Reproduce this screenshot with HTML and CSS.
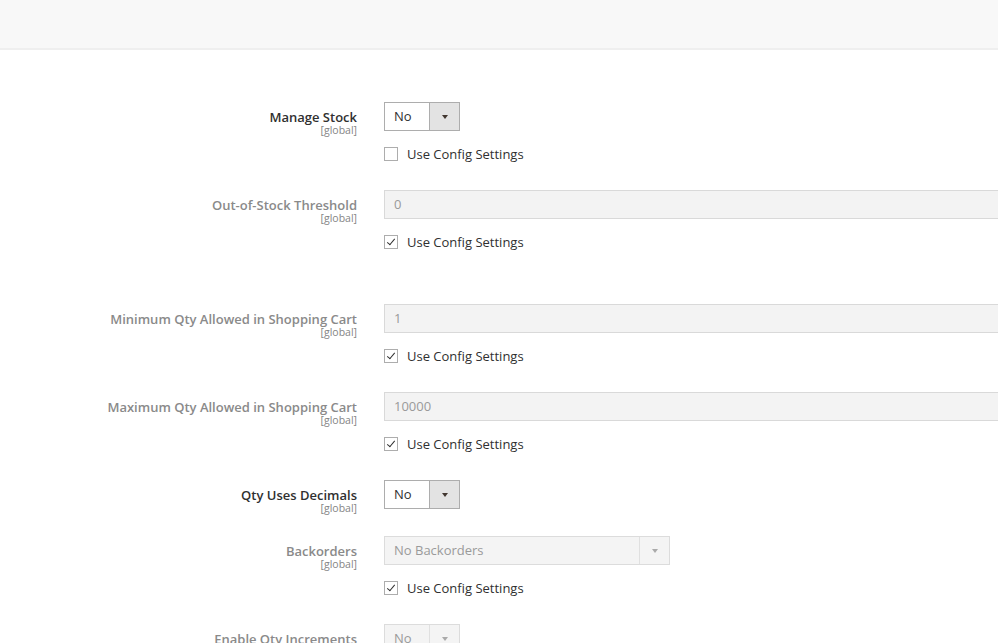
FILE: index.html
```html
<!DOCTYPE html>
<html>
<head>
<meta charset="utf-8">
<link rel="stylesheet" href="styles.css">
</head>
<body>
<div class="header"></div>
<div class="form">
  <div class="field">
    <div class="label"><span class="title">Manage Stock</span><span class="scope">[global]</span></div>
    <div class="control">
      <div class="select small"><span class="val">No</span><span class="arrow"><i></i></span></div>
      <label class="check"><span class="box"></span>Use Config Settings</label>
    </div>
  </div>
  <div class="field disabled">
    <div class="label"><span class="title">Out-of-Stock Threshold</span><span class="scope">[global]</span></div>
    <div class="control">
      <div class="input">0</div>
      <label class="check"><span class="box on"></span>Use Config Settings</label>
    </div>
  </div>
  <div class="spacer"></div>
  <div class="field disabled">
    <div class="label"><span class="title">Minimum Qty Allowed in Shopping Cart</span><span class="scope">[global]</span></div>
    <div class="control">
      <div class="input">1</div>
      <label class="check"><span class="box on"></span>Use Config Settings</label>
    </div>
  </div>
  <div class="field disabled">
    <div class="label"><span class="title">Maximum Qty Allowed in Shopping Cart</span><span class="scope">[global]</span></div>
    <div class="control">
      <div class="input">10000</div>
      <label class="check"><span class="box on"></span>Use Config Settings</label>
    </div>
  </div>
  <div class="field">
    <div class="label"><span class="title">Qty Uses Decimals</span><span class="scope">[global]</span></div>
    <div class="control">
      <div class="select small"><span class="val">No</span><span class="arrow"><i></i></span></div>
    </div>
  </div>
  <div class="field disabled">
    <div class="label"><span class="title">Backorders</span><span class="scope">[global]</span></div>
    <div class="control">
      <div class="select wide"><span class="val">No Backorders</span><span class="arrow"><i></i></span></div>
      <label class="check"><span class="box on"></span>Use Config Settings</label>
    </div>
  </div>
  <div class="field disabled">
    <div class="label"><span class="title">Enable Qty Increments</span><span class="scope">[global]</span></div>
    <div class="control">
      <div class="select small"><span class="val">No</span><span class="arrow"><i></i></span></div>
    </div>
  </div>
</div>
</body>
</html>
```

FILE: styles.css
```css
html, body {
  margin: 0;
  padding: 0;
  background: #fff;
  overflow: hidden;
  width: 998px;
  height: 643px;
  font-family: "Open Sans", "Liberation Sans", sans-serif;
  color: #303030;
}
.header {
  height: 48px;
  background: #f8f8f8;
  border-bottom: 2px solid #efefef;
}
.form {
  padding-top: 52px;
  display: flex;
  flex-direction: column;
}
.field {
  display: flex;
  align-items: flex-start;
  margin-bottom: 27px;
}
.field:last-child {
  margin-bottom: 0;
}
.spacer {
  height: 26px;
}
.label {
  width: 357px;
  height: 29px;
  flex: none;
  display: flex;
  flex-direction: column;
  align-items: flex-end;
  padding-top: 7px;
  box-sizing: border-box;
}
.title {
  font-size: 13px;
  font-weight: 600;
  line-height: 16px;
  color: #303030;
  white-space: nowrap;
}
.scope {
  font-size: 10.5px;
  line-height: 10px;
  color: #858585;
}
.disabled .title {
  color: #8a8a8a;
}
.control {
  margin-left: 27px;
  display: flex;
  flex-direction: column;
  align-items: flex-start;
}
.select {
  height: 29px;
  box-sizing: border-box;
  border: 1px solid #adadad;
  background: #fff;
  display: flex;
  font-size: 13px;
  line-height: 27px;
  color: #303030;
}
.select .val {
  flex: 1;
  padding-left: 9px;
}
.select .arrow {
  width: 29px;
  border-left: 1px solid #adadad;
  background: #e3e3e3;
  display: flex;
  align-items: center;
  justify-content: center;
}
.select .arrow i {
  width: 0;
  height: 0;
  border-left: 3px solid transparent;
  border-right: 3px solid transparent;
  border-top: 4px solid #41362f;
}
.select.small {
  width: 76px;
}
.select.wide {
  width: 286px;
}
.disabled .select {
  background: #f4f4f4;
  border-color: #dcdcdc;
  color: #9a9a9a;
}
.disabled .select .arrow {
  background: #f4f4f4;
  border-left-color: #e0e0e0;
}
.disabled .select .arrow i {
  border-top-color: #aaa;
}
.input {
  width: 700px;
  height: 29px;
  box-sizing: border-box;
  border: 1px solid #d9d9d9;
  background: #f3f3f3;
  font-size: 13px;
  line-height: 27px;
  padding-left: 9px;
  color: #9a9a9a;
}
.check {
  margin-top: 14px;
  height: 18px;
  display: flex;
  align-items: center;
  font-size: 13px;
  color: #303030;
  white-space: nowrap;
}
.box {
  width: 14px;
  height: 14px;
  box-sizing: border-box;
  border: 1px solid #adadad;
  background: #fff;
  margin-right: 9px;
  position: relative;
}
.box.on::after {
  content: "";
  position: absolute;
  left: 4px;
  top: 1px;
  width: 3px;
  height: 7px;
  border-right: 1.5px solid #303030;
  border-bottom: 1.5px solid #303030;
  transform: rotate(40deg);
}
```
